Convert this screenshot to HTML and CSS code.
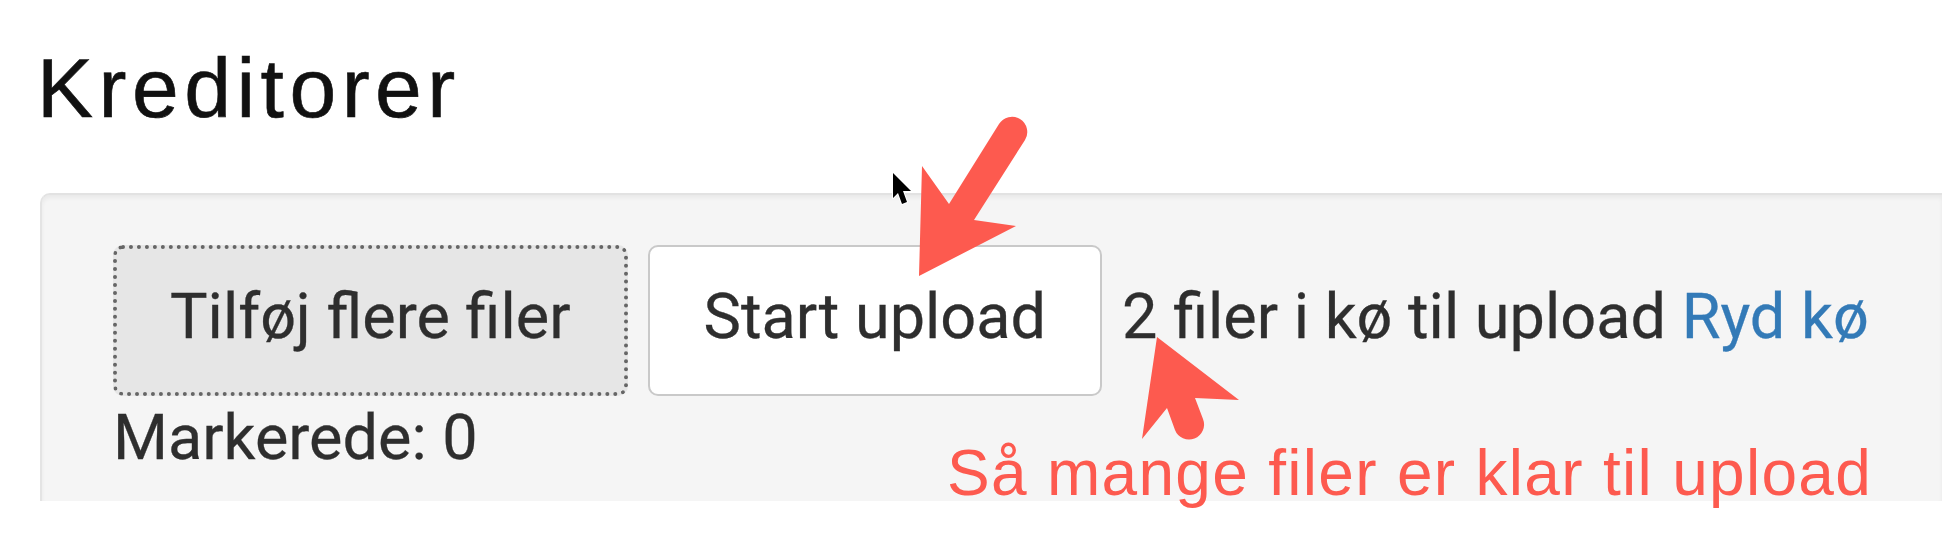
FILE: index.html
```html
<!DOCTYPE html>
<html lang="da">
<head>
    <meta charset="UTF-8">
    <title>Kreditorer</title>

    <link rel="stylesheet" href="styles.css">
</head>
<body>

<section id="main">
    <h1 class="title">Kreditorer</h1>

    <section class="well">
        <div class="upload-row">
            <button class="btn btn-add">Tilføj flere filer</button>
            <button class="btn btn-start">Start upload</button>
            <span class="queue">2 filer i kø til upload <a href="#" class="clear">Ryd kø</a></span>
        </div>
        <div class="marked">Markerede: 0</div>
    </section>

    <!-- annotations drawn on top of the screenshot -->
    <div class="note">Så mange filer er klar til upload</div>
    <svg class="marks" width="1942" height="546" viewBox="0 0 1942 546">
        <path class="arrow" d="M919,276 L922,166 L949,204 L999,124 A15,15 0 0 1 1025,140 L974,220 L1016,226 Z"/>
        <path class="arrow" d="M1157,337 L1239,400 L1195,398 L1203,419 A15,15 0 0 1 1175,430 L1167,408 L1142,439 Z"/>
        <path class="cursor" d="M893,173 L893,198 L898,193 L902,204 L907,202 L903,191 L911,191 Z"/>
    </svg>
</section>

</body>
</html>
```

FILE: styles.css
```css
body {
    margin: 0;
    background: #fff;
    font-family: Roboto, "Liberation Sans", sans-serif;
    color: #333;
    overflow: hidden;
}
#main {
    position: relative;
    height: 546px;
}
.title {
    margin: 0;
    padding: 46px 0 0 37px;
    font-family: "Liberation Sans", Arial, sans-serif;
    font-weight: normal;
    font-size: 84px;
    line-height: 85px;
    letter-spacing: 5.5px;
    color: #111;
    -webkit-text-stroke: 0.6px #111;
}
.well {
    margin: 62px 0 0 40px;
    padding: 50px 0 27px 71px;
    background: #f5f5f5;
    border-top: 2px solid #e2e2e2;
    border-left: 2px solid #e4e4e4;
    border-radius: 10px 0 0 0;
    box-shadow: inset 0 3px 4px rgba(0, 0, 0, .05);
}
.upload-row {
    display: flex;
    align-items: center;
}
.btn {
    height: 151px;
    padding: 0 54px 8px;
    font-family: Roboto, sans-serif;
    font-size: 63px;
    color: #2e2e2e;
    border-radius: 10px;
    cursor: pointer;
    -webkit-text-stroke: 0.3px #2e2e2e;
}
.btn-add {
    padding: 0 53px 8px;
    background: #e6e6e6;
    border: 4px dotted #666;
}
.btn-start {
    margin-left: 20px;
    background: #fff;
    border: 2px solid #c9c9c9;
}
.queue {
    margin-left: 20px;
    padding-bottom: 8px;
    font-size: 63px;
    color: #2e2e2e;
    -webkit-text-stroke: 0.3px #2e2e2e;
}
.clear {
    color: #337ab7;
    text-decoration: none;
    -webkit-text-stroke: 0.3px #337ab7;
}
.marked {
    margin-top: 5px;
    font-size: 63px;
    color: #2e2e2e;
    -webkit-text-stroke: 0.3px #2e2e2e;
}
.note {
    position: absolute;
    left: 947px;
    top: 441px;
    font-family: "Liberation Sans", Arial, sans-serif;
    font-size: 64px;
    line-height: 64px;
    letter-spacing: 1.3px;
    color: #fd5a4f;
}
.marks {
    position: absolute;
    left: 0;
    top: 0;
}
.arrow {
    fill: #fd5a4f;
}
.cursor {
    fill: #000;
    stroke: #fff;
    stroke-width: 2;
    stroke-linejoin: round;
    paint-order: stroke;
}
```
